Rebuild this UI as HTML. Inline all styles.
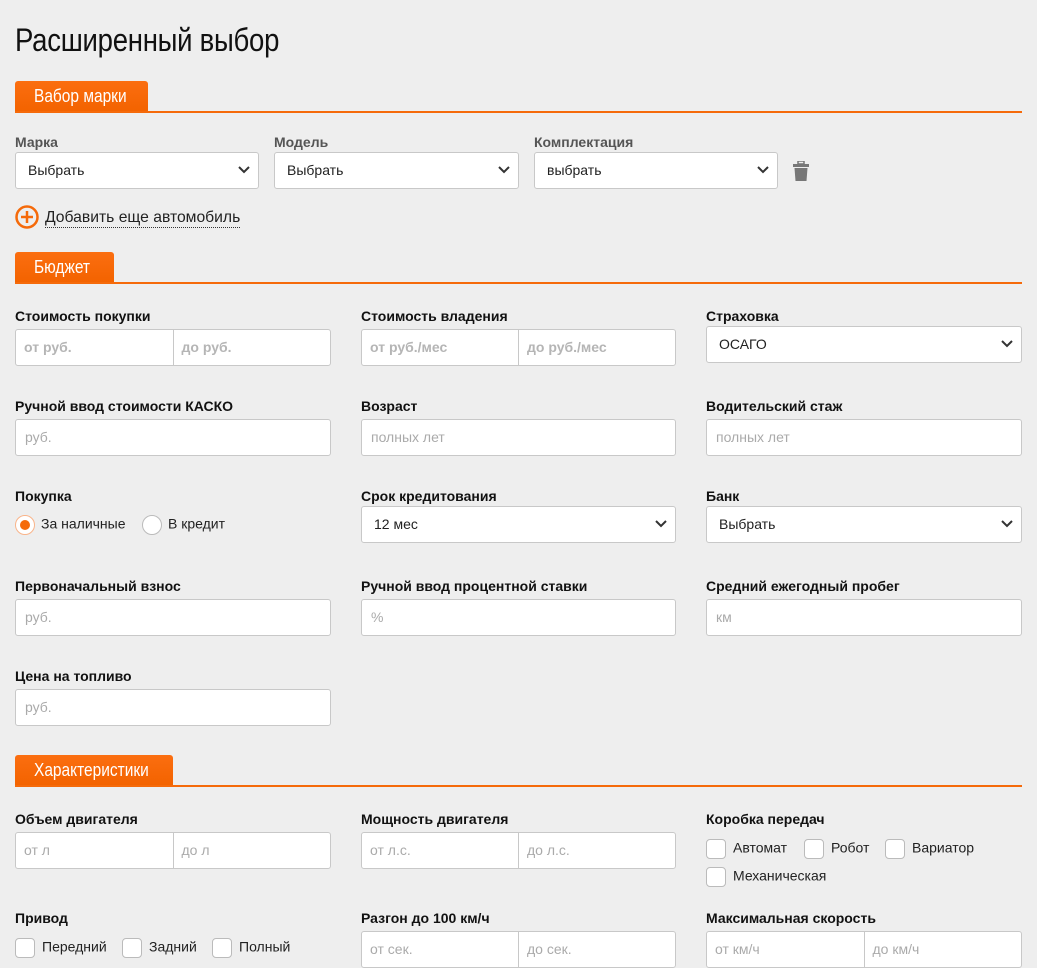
<!DOCTYPE html>
<html><head><meta charset="utf-8"><style>
*{box-sizing:border-box}
body{margin:0;background:#eeeeee;font-family:"Liberation Sans",sans-serif;width:1037px;height:956px;overflow:hidden;position:relative;color:#111}
.a{position:absolute}
h1{position:absolute;left:15px;top:22px;margin:0;font-weight:normal;font-size:32px;color:#111;transform:scaleX(.86);transform-origin:left;white-space:nowrap;letter-spacing:-0.3px}
.sec{position:absolute;left:15px;right:15px;height:32px;border-bottom:2px solid #f56a0a}
.tab{position:absolute;left:0;top:0;height:30px;background:linear-gradient(#fb6e10,#f36300);color:#fff;font-size:18px;line-height:31px;border-radius:3px 3px 0 0;white-space:nowrap;overflow:hidden}
.tab span{position:absolute;left:19px;display:inline-block;transform:scaleX(.86);transform-origin:left}
.lbl{position:absolute;font-size:14px;font-weight:bold;color:#111;white-space:nowrap}
.g{color:#555}
.inp{position:absolute;height:37px;background:#fff;border:1px solid #c8c8c8;border-radius:3px;font-size:14px;color:#aaa;line-height:35px;padding-left:9px;white-space:nowrap}
.split{display:flex;padding:0}
.split div{flex:1;padding-left:8px;font-weight:bold;color:#b5b5b5}
.split div+div{border-left:1px solid #c8c8c8}
.split.n div{font-weight:normal;color:#aaa}
.sel{position:absolute;height:37px;background:#fff;border:1px solid #c8c8c8;border-radius:3px;font-size:14px;color:#222;line-height:35px;padding-left:12px}
.sel svg{position:absolute;right:8px;top:13px}
.ck{display:inline-block;width:20px;height:20px;border:1px solid #bbb;border-radius:4px;background:#fff;vertical-align:middle;margin-right:7px}
.opt{position:absolute;font-size:14px;color:#222;white-space:nowrap}
</style></head><body>
<h1>Расширенный выбор</h1>

<div class="sec" style="top:81px"><div class="tab" style="width:133px"><span>Вабор марки</span></div></div>
<div class="lbl g" style="left:15px;top:134px">Марка</div>
<div class="lbl g" style="left:274px;top:134px">Модель</div>
<div class="lbl g" style="left:534px;top:134px">Комплектация</div>
<div class="sel" style="left:15px;top:152px;width:244px">Выбрать<svg width="12" height="8"><path d="M1 1l5 5 5-5" stroke="#333" stroke-width="2" fill="none"/></svg></div>
<div class="sel" style="left:274px;top:152px;width:245px">Выбрать<svg width="12" height="8"><path d="M1 1l5 5 5-5" stroke="#333" stroke-width="2" fill="none"/></svg></div>
<div class="sel" style="left:534px;top:152px;width:244px">выбрать<svg width="12" height="8"><path d="M1 1l5 5 5-5" stroke="#333" stroke-width="2" fill="none"/></svg></div>
<svg class="a" style="left:793px;top:161px" width="16" height="20"><rect x="5" y="0" width="6" height="3" fill="none" stroke="#777" stroke-width="1.5"/><rect x="0" y="3" width="16" height="3" fill="#777"/><path d="M1.5 7h13l-1 13h-11z" fill="#777"/></svg>
<svg class="a" style="left:15px;top:205px" width="24" height="24"><circle cx="12" cy="12" r="10.5" fill="none" stroke="#f56a0a" stroke-width="2.5"/><path d="M12 6v12M6 12h12" stroke="#f56a0a" stroke-width="2.5"/></svg>
<div class="a" style="left:45px;top:208px;font-size:15.7px;color:#222;border-bottom:1px dotted #333;line-height:19px">Добавить еще автомобиль</div>

<div class="sec" style="top:252px"><div class="tab" style="width:99px"><span>Бюджет</span></div></div>
<div class="lbl" style="left:15px;top:308px">Стоимость покупки</div>
<div class="lbl" style="left:361px;top:308px">Стоимость владения</div>
<div class="lbl" style="left:706px;top:308px">Страховка</div>
<div class="inp split" style="left:15px;top:329px;width:316px"><div>от руб.</div><div>до руб.</div></div>
<div class="inp split" style="left:361px;top:329px;width:315px"><div>от руб./мес</div><div>до руб./мес</div></div>
<div class="sel" style="left:706px;top:326px;width:316px">ОСАГО<svg width="12" height="8"><path d="M1 1l5 5 5-5" stroke="#333" stroke-width="2" fill="none"/></svg></div>

<div class="lbl" style="left:15px;top:398px">Ручной ввод стоимости КАСКО</div>
<div class="lbl" style="left:361px;top:398px">Возраст</div>
<div class="lbl" style="left:706px;top:398px">Водительский стаж</div>
<div class="inp" style="left:15px;top:419px;width:316px">руб.</div>
<div class="inp" style="left:361px;top:419px;width:315px">полных лет</div>
<div class="inp" style="left:706px;top:419px;width:316px">полных лет</div>

<div class="lbl" style="left:15px;top:488px">Покупка</div>
<div class="lbl" style="left:361px;top:488px">Срок кредитования</div>
<div class="lbl" style="left:706px;top:488px">Банк</div>
<div class="opt" style="left:15px;top:515px"><span style="display:inline-block;width:20px;height:20px;border-radius:50%;border:1px solid #f9b48a;background:#fff;vertical-align:middle;margin-right:6px;position:relative"><span style="position:absolute;left:4px;top:4px;width:10px;height:10px;border-radius:50%;background:#f56a0a"></span></span>За наличные</div>
<div class="opt" style="left:142px;top:515px"><span style="display:inline-block;width:20px;height:20px;border-radius:50%;border:1px solid #bbb;background:#fff;vertical-align:middle;margin-right:6px"></span>В кредит</div>
<div class="sel" style="left:361px;top:506px;width:315px">12 мес<svg width="12" height="8"><path d="M1 1l5 5 5-5" stroke="#333" stroke-width="2" fill="none"/></svg></div>
<div class="sel" style="left:706px;top:506px;width:316px">Выбрать<svg width="12" height="8"><path d="M1 1l5 5 5-5" stroke="#333" stroke-width="2" fill="none"/></svg></div>

<div class="lbl" style="left:15px;top:578px">Первоначальный взнос</div>
<div class="lbl" style="left:361px;top:578px">Ручной ввод процентной ставки</div>
<div class="lbl" style="left:706px;top:578px">Средний ежегодный пробег</div>
<div class="inp" style="left:15px;top:599px;width:316px">руб.</div>
<div class="inp" style="left:361px;top:599px;width:315px">%</div>
<div class="inp" style="left:706px;top:599px;width:316px">км</div>

<div class="lbl" style="left:15px;top:668px">Цена на топливо</div>
<div class="inp" style="left:15px;top:689px;width:316px">руб.</div>

<div class="sec" style="top:755px"><div class="tab" style="width:158px"><span>Характеристики</span></div></div>
<div class="lbl" style="left:15px;top:811px">Объем двигателя</div>
<div class="lbl" style="left:361px;top:811px">Мощность двигателя</div>
<div class="lbl" style="left:706px;top:811px">Коробка передач</div>
<div class="inp split n" style="left:15px;top:832px;width:316px"><div>от л</div><div>до л</div></div>
<div class="inp split n" style="left:361px;top:832px;width:315px"><div>от л.с.</div><div>до л.с.</div></div>
<div class="opt" style="left:706px;top:839px"><span class="ck"></span>Автомат</div>
<div class="opt" style="left:804px;top:839px"><span class="ck"></span>Робот</div>
<div class="opt" style="left:885px;top:839px"><span class="ck"></span>Вариатор</div>
<div class="opt" style="left:706px;top:867px"><span class="ck"></span>Механическая</div>

<div class="lbl" style="left:15px;top:910px">Привод</div>
<div class="lbl" style="left:361px;top:910px">Разгон до 100 км/ч</div>
<div class="lbl" style="left:706px;top:910px">Максимальная скорость</div>
<div class="opt" style="left:15px;top:938px"><span class="ck"></span>Передний</div>
<div class="opt" style="left:122px;top:938px"><span class="ck"></span>Задний</div>
<div class="opt" style="left:212px;top:938px"><span class="ck"></span>Полный</div>
<div class="inp split n" style="left:361px;top:931px;width:315px"><div>от сек.</div><div>до сек.</div></div>
<div class="inp split n" style="left:706px;top:931px;width:316px"><div>от км/ч</div><div>до км/ч</div></div>
</body></html>
